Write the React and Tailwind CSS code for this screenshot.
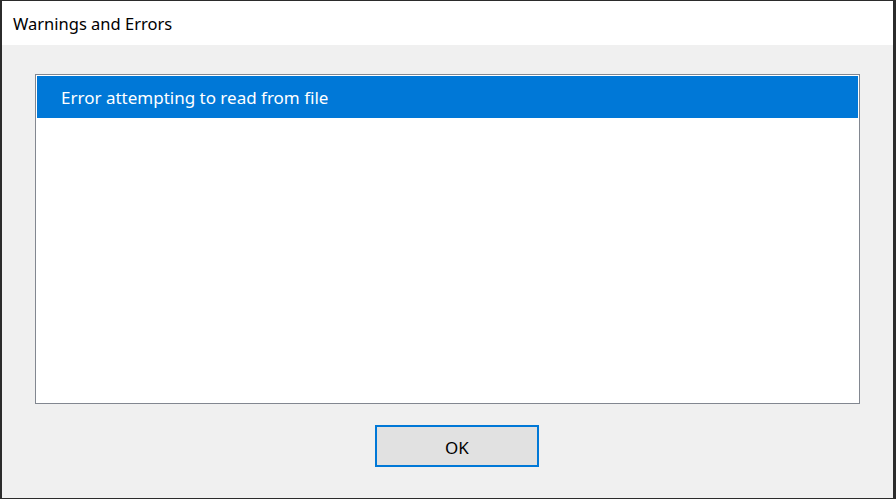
export default function App() {
  return (
    <div
      className="w-[896px] h-[499px] bg-[#2b2b2b] pl-[2px] pt-[1px] pr-[3px] pb-[1px] flex"
      style={{ fontFamily: '"Noto Sans", "Open Sans", sans-serif' }}
    >
      <div className="flex-1 flex flex-col bg-[#f0f0f0]">
        <div className="h-[44px] bg-white flex items-center pl-[11px] pt-[2px] text-[16.5px] text-black">
          Warnings and Errors
        </div>
        <div className="flex-1 flex flex-col">
          <div className="ml-[33px] mt-[29px] w-[825px] h-[330px] border border-[#828790] bg-white p-px">
            <div className="h-[42px] bg-[#0078d7] text-white text-[17px] flex items-center pl-[24px] pt-[2px]">
              Error attempting to read from file
            </div>
          </div>
          <button className="ml-[373px] mt-[21px] w-[164px] h-[42px] border-2 border-[#0078d7] bg-[#e1e1e1] text-[17px] text-black pt-[3px]">
            OK
          </button>
        </div>
      </div>
    </div>
  );
}
